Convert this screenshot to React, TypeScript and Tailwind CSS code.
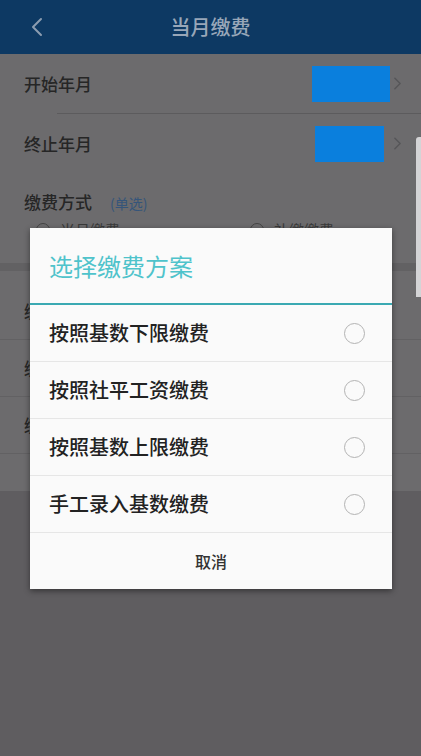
import React from 'react';

const font = { fontFamily: '"Noto Sans CJK SC", "Noto Sans", sans-serif' };

const plans = ['按照基数下限缴费', '按照社平工资缴费', '按照基数上限缴费', '手工录入基数缴费'];

function Chevron({ className }: { className?: string }) {
  return (
    <svg className={className} viewBox="0 0 8 14" fill="none" stroke="currentColor" strokeWidth="1.6">
      <path d="M1 1l6 6-6 6" strokeLinecap="round" strokeLinejoin="round" />
    </svg>
  );
}

function DateRow({ label, boxClass }: { label: string; boxClass: string }) {
  return (
    <div className="h-[59px] flex items-center pl-[24px] pr-[20px]">
      <span className="text-[17px] font-medium text-[#262626]">{label}</span>
      <div className="ml-auto flex items-center">
        <div className={`relative z-20 bg-[#0a7fdd] h-[36px] ${boxClass}`}></div>
        <Chevron className="w-[7px] h-[13px] text-[#555558] ml-[4px]" />
      </div>
    </div>
  );
}

export default function App() {
  return (
    <div className="relative w-[421px] h-[756px] overflow-hidden bg-[#5f5d60]" style={font}>
      <header className="h-[54px] bg-[#0d3963] flex items-center relative">
        <svg className="absolute left-[30px] top-[17px] w-[13px] h-[20px] text-[#8c9db0]" viewBox="0 0 13 20" fill="none" stroke="currentColor" strokeWidth="2">
          <path d="M11 2L3 10l8 8" strokeLinecap="round" strokeLinejoin="round" />
        </svg>
        <h1 className="w-full text-center text-[20px] font-medium text-[#98a7b9]">当月缴费</h1>
      </header>

      <div className="bg-[#6c6b6d]">
        <DateRow label="开始年月" boxClass="w-[78px]" />
        <div className="h-px bg-[#5c5b5d] ml-[57px]"></div>
        <DateRow label="终止年月" boxClass="w-[69px] mr-[6px]" />
        <div className="h-[90px] pl-[24px] pt-[16px]">
          <div className="flex items-baseline gap-[18px]">
            <span className="text-[17px] font-medium text-[#262626]">缴费方式</span>
            <span className="text-[14px] text-[#35557a]">(单选)</span>
          </div>
          <div className="flex items-center mt-[4px] pl-[12px] text-[15px] text-[#3a3a3a]">
            <span className="w-[14px] h-[14px] rounded-full border border-[#444] mr-[10px]"></span>
            <span>当月缴费</span>
            <span className="w-[14px] h-[14px] rounded-full border border-[#444] ml-[130px] mr-[10px]"></span>
            <span>补缴缴费</span>
          </div>
        </div>
      </div>
      <div className="h-[8px] bg-[#626163]"></div>
      <div className="bg-[#6c6b6d] h-[220px] pt-[12px]">
        {['缴', '缴', '缴'].map((t, i) => (
          <div key={i} className="h-[57px] flex items-center pl-[24px] border-b border-[#626163]">
            <span className="text-[17px] font-medium text-[#262626]">{t}</span>
          </div>
        ))}
      </div>

      <div className="absolute right-0 top-[137px] w-[5px] h-[160px] bg-[#d4d4d6] rounded-tl-[3px]"></div>

      <div className="absolute left-[30px] top-[228px] w-[362px] bg-[#fafafa] shadow-[0_2px_6px_rgba(0,0,0,0.45)] z-30">
        <div className="h-[75px] flex items-center pl-[19px]">
          <span className="text-[24px] text-[#4fc3cb]">选择缴费方案</span>
        </div>
        <div className="h-[2px] bg-[#3aa9b2]"></div>
        {plans.map((p) => (
          <div key={p} className="h-[57px] flex items-center pl-[19px] pr-[27px] border-b border-[#e6e6e6]">
            <span className="text-[20px] font-medium text-[#222]">{p}</span>
            <span className="ml-auto w-[21px] h-[21px] rounded-full border-[1.5px] border-[#b3b3b3]"></span>
          </div>
        ))}
        <div className="h-[56px] flex items-center justify-center">
          <span className="text-[16px] font-medium text-[#333]">取消</span>
        </div>
      </div>
    </div>
  );
}
